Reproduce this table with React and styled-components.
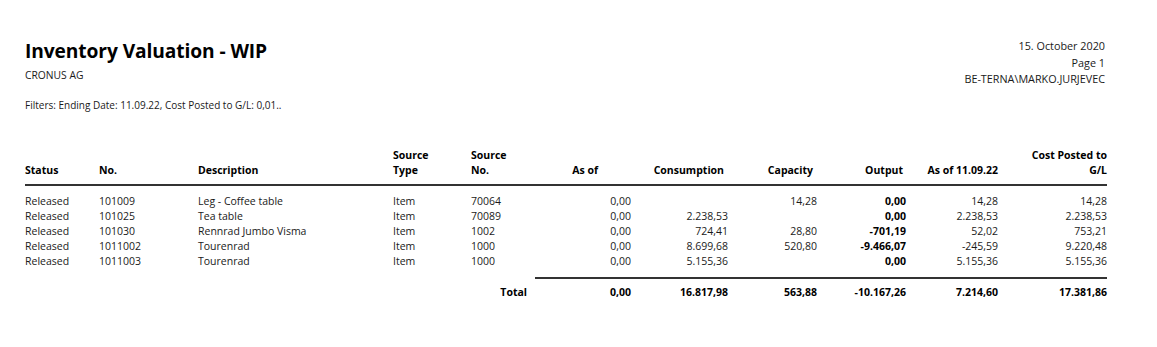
import React from 'react';
import styled, { createGlobalStyle } from 'styled-components';

const GlobalStyle = createGlobalStyle`
body {
  margin: 0;
  background: #ffffff;
  font-family: "Open Sans", "Noto Sans", sans-serif;
  color: #1a1a1a;
}
`;

const Page = styled.div`
width: 1157px;
height: 347px;
box-sizing: border-box;
padding: 38px 50px 0 25px;
`;

const Head = styled.div`
display: flex;
justify-content: space-between;
align-items: flex-start;
`;

const Title = styled.h1`
margin: 0;
font-size: 19.2px;
font-weight: 700;
line-height: 26px;
color: #000;
letter-spacing: -0.1px;
`;

const Company = styled.div`
font-size: 10.3px;
line-height: 14px;
margin-top: 4px;
`;

const Meta = styled.div`
text-align: right;
font-size: 10.8px;
line-height: 16.5px;
padding-right: 2px;
`;

const Filters = styled.div`
font-size: 10px;
margin-top: 10px;
line-height: 14px;
`;

const Grid = styled.div`
display: grid;
grid-template-columns: 74px 99px 195px 78px 64px 96px 97px 89px 89px 92px 109px;
margin-top: 36px;
width: 1082px;
font-size: 10.5px;
`;

const HeadCell = styled.div`
font-weight: 700;
color: #000;
line-height: 15px;
padding-bottom: 6px;
border-bottom: 2px solid #333;
display: flex;
align-items: flex-end;
justify-content: ${p => (p.$right ? 'flex-end' : 'flex-start')};
text-align: ${p => (p.$right ? 'right' : 'left')};
padding-right: ${p => p.$pr || 0}px;
`;

const Cell = styled.div`
line-height: 15.2px;
text-align: ${p => (p.$right ? 'right' : 'left')};
font-weight: ${p => (p.$bold ? 700 : 400)};
color: ${p => (p.$bold ? '#000' : '#1a1a1a')};
padding-top: ${p => (p.$first ? 8 : 0)}px;
white-space: nowrap;
`;

const Spacer = styled.div`
grid-column: span ${p => p.$span};
`;

const TotalLine = styled.div`
grid-column: span 6;
border-top: 2px solid #333;
margin-top: 7px;
`;

const TotalCell = styled.div`
font-weight: 700;
color: #000;
text-align: right;
line-height: 15px;
padding-top: 6px;
padding-right: ${p => p.$pr || 0}px;
`;

const rows = [
  ['Released', '101009', 'Leg - Coffee table', 'Item', '70064', '0,00', '', '14,28', '0,00', '14,28', '14,28'],
  ['Released', '101025', 'Tea table', 'Item', '70089', '0,00', '2.238,53', '', '0,00', '2.238,53', '2.238,53'],
  ['Released', '101030', 'Rennrad Jumbo Visma', 'Item', '1002', '0,00', '724,41', '28,80', '-701,19', '52,02', '753,21'],
  ['Released', '1011002', 'Tourenrad', 'Item', '1000', '0,00', '8.699,68', '520,80', '-9.466,07', '-245,59', '9.220,48'],
  ['Released', '1011003', 'Tourenrad', 'Item', '1000', '0,00', '5.155,36', '', '0,00', '5.155,36', '5.155,36'],
];

const headers = [
  { t: 'Status' },
  { t: 'No.' },
  { t: 'Description' },
  { t: <>Source<br />Type</> },
  { t: <>Source<br />No.</> },
  { t: 'As of', r: true, pr: 33 },
  { t: 'Consumption', r: true, pr: 4 },
  { t: 'Capacity', r: true, pr: 4 },
  { t: 'Output', r: true, pr: 3 },
  { t: 'As of 11.09.22', r: true },
  { t: <>Cost Posted to<br />G/L</>, r: true },
];

const totals = ['0,00', '16.817,98', '563,88', '-10.167,26', '7.214,60', '17.381,86'];

const App = () => {
  return (
    <Page>
      <GlobalStyle />
      <Head>
        <div>
          <Title>Inventory Valuation - WIP</Title>
          <Company>CRONUS AG</Company>
        </div>
        <Meta>
          <div>15. October 2020</div>
          <div>Page 1</div>
          <div>BE-TERNA\MARKO.JURJEVEC</div>
        </Meta>
      </Head>
      <Filters>Filters: Ending Date: 11.09.22, Cost Posted to G/L: 0,01..</Filters>
      <Grid>
        {headers.map((h, i) => (
          <HeadCell key={i} $right={h.r} $pr={h.pr}>
            <span>{h.t}</span>
          </HeadCell>
        ))}
        {rows.map((row, ri) =>
          row.map((v, ci) => (
            <Cell key={ri + '-' + ci} $right={ci >= 5} $bold={ci === 8} $first={ri === 0}>
              {v}
            </Cell>
          ))
        )}
        <Spacer $span={5} />
        <TotalLine />
        <Spacer $span={4} />
        <TotalCell $pr={8}>Total</TotalCell>
        {totals.map((t, i) => (
          <TotalCell key={i}>{t}</TotalCell>
        ))}
      </Grid>
    </Page>
  );
};

export default App;
